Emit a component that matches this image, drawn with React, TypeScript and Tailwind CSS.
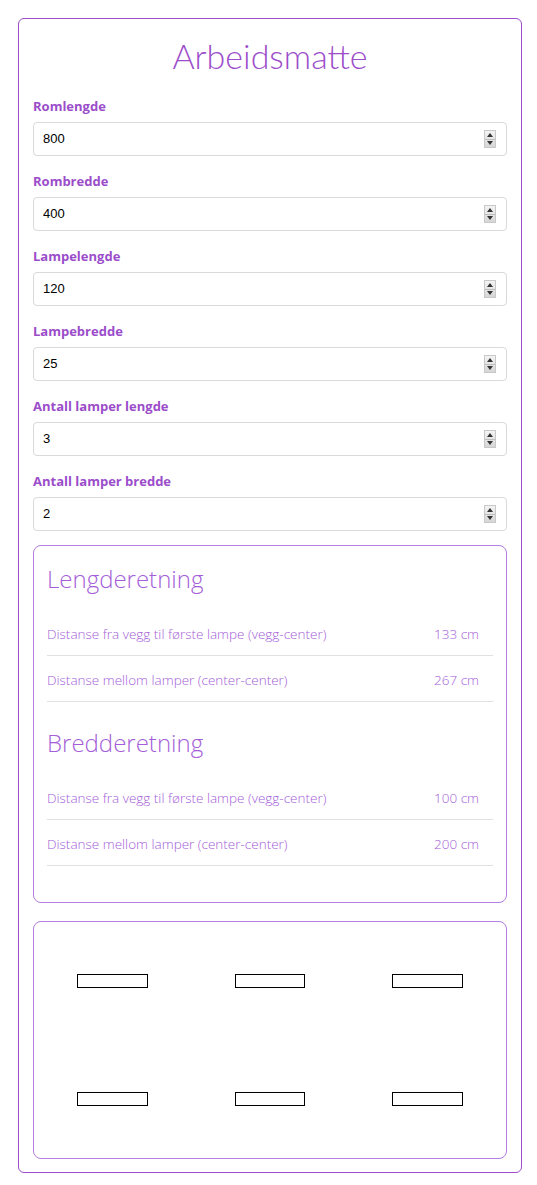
import React, { useState } from 'react';

const purple = 'text-[#9b4dca]';

const Spinner = () => (
    <div className="flex flex-col w-[12px] h-[18px] border border-[#c8c8c8] bg-gradient-to-b from-[#f4f4f4] to-[#d6d6d6]">
        <div className="flex-1 flex items-center justify-center border-b border-[#bdbdbd]">
            <svg width="6" height="4" viewBox="0 0 6 4"><path d="M3 0 L6 4 L0 4 Z" fill="#333" /></svg>
        </div>
        <div className="flex-1 flex items-center justify-center">
            <svg width="6" height="4" viewBox="0 0 6 4"><path d="M0 0 L6 0 L3 4 Z" fill="#333" /></svg>
        </div>
    </div>
);

interface FieldProps {
    label: string;
    value: number;
    onChange: (v: number) => void;
}

const Field: React.FC<FieldProps> = ({ label, value, onChange }) => (
    <div className="flex flex-col">
        <label className={`h-[20px] leading-[20px] text-[13px] font-bold ${purple}`}>{label}</label>
        <div className="mt-[6px] h-[34px] flex items-center border border-[#d9d9d9] rounded-[4px] bg-white pl-[9px] pr-[10px]">
            <input
                type="text"
                value={value}
                onChange={e => onChange(Number(e.target.value) || 0)}
                className="flex-1 min-w-0 outline-none bg-transparent text-[13px] text-black font-['Liberation_Sans',sans-serif]"
            />
            <Spinner />
        </div>
    </div>
);

const ResultRow = ({ text, value }: { text: string; value: number }) => (
    <div className="flex items-center h-[46px] pt-[3px] border-b border-[#e1e1e1] text-[13.5px] font-light text-[#a45ed8]">
        <div className="flex-1">{text}</div>
        <div className="w-[59px]">{Math.round(value)} cm</div>
    </div>
);

export default function App() {
    const [romL, setRomL] = useState(800);
    const [romB, setRomB] = useState(400);
    const [lampL, setLampL] = useState(120);
    const [lampB, setLampB] = useState(25);
    const [nL, setNL] = useState(3);
    const [nB, setNB] = useState(2);

    // distances in each direction
    const stepL = romL / nL;
    const stepB = romB / nB;
    const firstL = stepL / 2;
    const firstB = stepB / 2;

    const lamps: { x: number; y: number }[] = [];
    for (let j = 0; j < nB; j++) {
        for (let i = 0; i < nL; i++) {
            lamps.push({ x: firstL + i * stepL, y: firstB + j * stepB });
        }
    }

    return (
        <div className="min-h-screen bg-white pt-[18px] pb-[12px] px-[16px] font-['Open_Sans','Noto_Sans',sans-serif]">
            <div className="w-[504px] ml-[2px] border border-[#9b4dca] rounded-[6px] px-[14px] pt-[15px] pb-[13px]">
                <h1 className={`text-center text-[34px] leading-[44px] font-light font-['Lato','Open_Sans',sans-serif] ${purple} mb-[18px]`}>Arbeidsmatte</h1>

                <div className="flex flex-col gap-[15px]">
                    <Field label="Romlengde" value={romL} onChange={setRomL} />
                    <Field label="Rombredde" value={romB} onChange={setRomB} />
                    <Field label="Lampelengde" value={lampL} onChange={setLampL} />
                    <Field label="Lampebredde" value={lampB} onChange={setLampB} />
                    <Field label="Antall lamper lengde" value={nL} onChange={setNL} />
                    <Field label="Antall lamper bredde" value={nB} onChange={setNB} />
                </div>

                {/* Results */}
                <div className="mt-[14px] border border-[#b27ee0] rounded-[8px] px-[13px] pt-[17px] pb-[36px]">
                    <h2 className="text-[24px] leading-[32px] font-light text-[#a45ed8] mb-[15px]">Lengderetning</h2>
                    <ResultRow text="Distanse fra vegg til første lampe (vegg-center)" value={firstL} />
                    <ResultRow text="Distanse mellom lamper (center-center)" value={stepL} />

                    <h2 className="mt-[25px] text-[24px] leading-[32px] font-light text-[#a45ed8] mb-[15px]">Bredderetning</h2>
                    <ResultRow text="Distanse fra vegg til første lampe (vegg-center)" value={firstB} />
                    <ResultRow text="Distanse mellom lamper (center-center)" value={stepB} />
                </div>

                {/* Room drawing */}
                <div className="mt-[18px] border border-[#b27ee0] rounded-[8px]">
                    <div className="relative w-full" style={{ aspectRatio: `${romL} / ${romB}` }}>
                        {lamps.map((l, idx) => (
                            <div
                                key={idx}
                                className="absolute border border-black bg-white"
                                style={{
                                    left: `${((l.x - lampL / 2) / romL) * 100}%`,
                                    top: `${((l.y - lampB / 2) / romB) * 100}%`,
                                    width: `${(lampL / romL) * 100}%`,
                                    height: `${(lampB / romB) * 100}%`,
                                }}
                            />
                        ))}
                    </div>
                </div>
            </div>
        </div>
    );
}
